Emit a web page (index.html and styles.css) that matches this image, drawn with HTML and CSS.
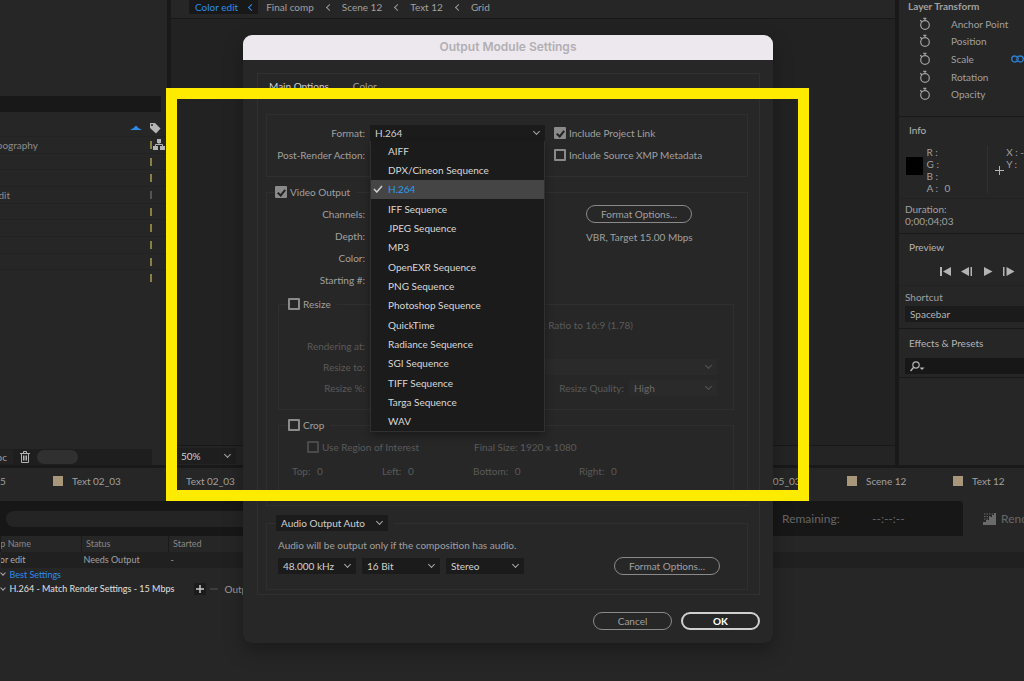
FILE: index.html
```html
<!DOCTYPE html>
<html lang="en">

<head>
  <meta charset="UTF-8">
  <meta name="viewport" content="width=device-width, initial-scale=1.0">
  <title>Output Module Settings</title>
  <link rel="stylesheet" href="styles.css">
</head>

<body>
  <!-- shared icons -->
  <svg class="sprite" aria-hidden="true">
    <symbol id="stopwatch" viewBox="0 0 12 14">
      <circle cx="6" cy="8" r="4.3" fill="none" stroke="currentColor" stroke-width="1.2"/>
      <path d="M4.2 1.3h3.2M6 1v2.5M1.2 3.2l1.8 1.6" fill="none" stroke="currentColor" stroke-width="1.3"/>
    </symbol>
  </svg>

  <div class="app">
    <div class="workspace">
      <section class="project">
        <div class="project-thumb"></div>
        <input class="project-search" type="text" aria-label="Search project">
        <div class="project-head">
          <svg class="sort" width="12" height="6" viewBox="0 0 12 6"><path d="M0 5Q4 3.5 6 .5Q8 3.5 12 5z" fill="#2d8ceb"/></svg>
          <svg width="12" height="12" viewBox="0 0 12 12"><path d="M1 1h5l5.5 5.5-4.5 5L1 6z" fill="#b4b4b4"/><circle cx="3" cy="3" r="1" fill="#262626"/></svg>
        </div>
        <ul class="project-list">
          <li><span>Typography</span><i></i>
            <svg class="flow" width="12" height="11" viewBox="0 0 12 11"><path d="M4 0h4v4H4zM0 7h5v4H0zM7 7h5v4H7z" fill="#b4b4b4"/><path d="M6 4v1.5M2.5 7V5.5h7V7" fill="none" stroke="#b4b4b4"/></svg>
          </li>
          <li><i></i></li>
          <li><i></i></li>
          <li><span class="short">Color edit</span><i class="grey"></i></li>
          <li><i></i></li>
          <li><i></i></li>
          <li><i></i></li>
          <li><i></i></li>
          <li><i></i></li>
        </ul>
        <div class="project-foot">
          <span class="bpc">8 bpc</span>
          <svg width="10" height="12" viewBox="0 0 10 12" fill="none" stroke="#b4b4b4"><path d="M0 2.5h10M3.5 2V.5h3V2M1.5 3v8.500h7V3M3.5 4.5v5M5 4.5v5M6.5 4.5v5"/></svg>
          <div class="scroll-thumb"></div>
        </div>
      </section>

      <section class="viewer">
        <nav class="crumbs">
          <a class="active" href="#">Color edit</a>
          <a href="#">Final comp</a>
          <a href="#">Scene 12</a>
          <a href="#">Text 12</a>
          <a href="#">Grid</a>
        </nav>
        <div class="canvas"></div>
        <div class="viewer-foot">
          <span class="select zoom"><select aria-label="Magnification"><option>50%</option></select></span>
        </div>
      </section>

      <aside class="sidebar">
        <section class="transform">
          <h2>Layer Transform</h2>
          <ul>
            <li><svg width="12" height="14"><use href="#stopwatch"/></svg>Anchor Point</li>
            <li><svg width="12" height="14"><use href="#stopwatch"/></svg>Position</li>
            <li><svg width="12" height="14"><use href="#stopwatch"/></svg>Scale
              <svg class="link" width="13" height="8" viewBox="0 0 13 8" fill="none" stroke="#2d7fd0" stroke-width="1.4"><path d="M7 5.5C6 7 4.8 7 3.7 7a3 3 0 0 1 0-6C6 1 6.5 3 8 4.2"/><path d="M6 2.5C7 1 8.2 1 9.3 1a3 3 0 0 1 0 6C7 7 6.5 5 5 3.8"/></svg>
            </li>
            <li><svg width="12" height="14"><use href="#stopwatch"/></svg>Rotation</li>
            <li><svg width="12" height="14"><use href="#stopwatch"/></svg>Opacity</li>
          </ul>
        </section>
        <section class="info">
          <h3>Info</h3>
          <div class="info-values">
            <div class="swatch"></div>
            <dl>
              <dt>R :</dt><dd></dd>
              <dt>G :</dt><dd></dd>
              <dt>B :</dt><dd></dd>
              <dt>A :</dt><dd>0</dd>
            </dl>
            <svg class="cross" width="9" height="9" viewBox="0 0 9 9" stroke="#b4b4b4"><path d="M4.5 0v9M0 4.5h9"/></svg>
            <div class="pos">X : -<br>Y :</div>
          </div>
          <p class="duration">Duration:<br>0;00;04;03</p>
        </section>
        <section class="preview">
          <h3>Preview</h3>
          <div class="transport">
            <button aria-label="First frame"><svg width="12" height="9" viewBox="0 0 12 9"><path d="M0 0h2v9H0zM11 0v9L3 4.5z"/></svg></button>
            <button aria-label="Previous frame"><svg width="12" height="9" viewBox="0 0 12 9"><path d="M8 0v9L0 4.5zM9.5 0h1.5v9H9.5z"/></svg></button>
            <button aria-label="Play"><svg width="12" height="9" viewBox="0 0 12 9"><path d="M2 0v9l8.5-4.5z"/></svg></button>
            <button aria-label="Next frame"><svg width="12" height="9" viewBox="0 0 12 9"><path d="M0 0h1.5v9H0zM3.5 0v9l8-4.5z"/></svg></button>
          </div>
          <label for="shortcut">Shortcut</label>
          <select id="shortcut"><option>Spacebar</option></select>
        </section>
        <section class="effects">
          <h3>Effects &amp; Presets</h3>
          <div class="effects-search">
            <svg width="15" height="11" viewBox="0 0 15 11"><circle cx="6" cy="4" r="3.2" fill="none" stroke="#b4b4b4" stroke-width="1.2"/><path d="M3.7 6.3L.5 10" stroke="#b4b4b4" stroke-width="1.5"/><path d="M9.5 6.5h5L12 9z" fill="#b4b4b4"/></svg>
            <input type="text" aria-label="Search effects">
          </div>
        </section>
      </aside>
    </div>

    <nav class="timeline-tabs">
      <a class="cut" href="#">5</a>
      <a class="wide" href="#">Text 02_03</a>
      <a class="wide" href="#">Text 02_03</a>
      <span class="spacer"></span>
      <a class="wider" href="#">Scene 05_03</a>
      <a href="#">Scene 12</a>
      <a class="last" href="#">Text 12</a>
    </nav>

    <div class="queue-bar">
      <div class="queue-status">
        <div class="progress"></div>
        <span class="remaining">Remaining:</span>
        <span class="time">--:--:--</span>
      </div>
      <button class="render" disabled>
        <svg width="13" height="12" viewBox="0 0 13 12"><path d="M13 0v12H0V9h3V7h3V4h3V2h2V0z" fill="#6a6a6a"/><path d="M1 1h9M1 3.5h7M1 6h4" stroke="#666" stroke-dasharray="1.5 1"/></svg>
        Render
      </button>
    </div>

    <table class="queue">
      <thead>
        <tr>
          <th class="name"><span class="clip">Comp Name</span></th>
          <th class="status">Status</th>
          <th>Started</th>
        </tr>
      </thead>
      <tbody>
        <tr class="item">
          <td><span class="clip">Color edit</span></td>
          <td>Needs Output</td>
          <td>-</td>
        </tr>
        <tr class="setting">
          <td colspan="3"><span class="arrow"></span><a href="#">Best Settings</a></td>
        </tr>
        <tr class="setting">
          <td colspan="3">
            <div class="module">
              <span class="arrow"></span>
              <a class="module-name" href="#">H.264 - Match Render Settings - 15 Mbps</a>
              <button class="plus" aria-label="Add output module"><svg width="12" height="12" viewBox="0 0 12 12"><path d="M6 2v8M2 6h8" stroke="#ccc" stroke-width="1.5"/></svg></button>
              <button class="minus" aria-label="Remove output module"><svg width="12" height="12" viewBox="0 0 12 12"><path d="M2 6h8" stroke="#444" stroke-width="1.5"/></svg></button>
              <span class="output-to">Output To:</span>
            </div>
          </td>
        </tr>
      </tbody>
    </table>
  </div>

  <form class="dialog" role="dialog" aria-labelledby="dialog-title">
    <h1 id="dialog-title">Output Module Settings</h1>
    <div class="dialog-body">
      <div class="pane">
        <nav class="tabs">
          <a class="active" href="#">Main Options</a>
          <a href="#">Color</a>
        </nav>

        <div class="group">
          <div class="row">
            <label class="name" for="format">Format:</label>
            <div class="format">
              <span class="select"><select id="format"><option>H.264</option></select></span>
              <ul class="menu">
                <li>AIFF</li>
                <li>DPX/Cineon Sequence</li>
                <li class="selected"><svg width="10" height="8" viewBox="0 0 10 8"><path d="M1 4l2.8 3L9 1" fill="none" stroke="#d0d0d0" stroke-width="1.5"/></svg>H.264</li>
                <li>IFF Sequence</li>
                <li>JPEG Sequence</li>
                <li>MP3</li>
                <li>OpenEXR Sequence</li>
                <li>PNG Sequence</li>
                <li>Photoshop Sequence</li>
                <li>QuickTime</li>
                <li>Radiance Sequence</li>
                <li>SGI Sequence</li>
                <li>TIFF Sequence</li>
                <li>Targa Sequence</li>
                <li>WAV</li>
              </ul>
            </div>
            <label class="check"><input type="checkbox" checked>Include Project Link</label>
          </div>
          <div class="row">
            <span class="name">Post-Render Action:</span>
            <div class="format"></div>
            <label class="check"><input type="checkbox">Include Source XMP Metadata</label>
          </div>
        </div>

        <fieldset class="video">
          <legend><label class="check"><input type="checkbox" checked>Video Output</label></legend>
          <div class="video-top">
            <div>
              <div class="row"><span class="name">Channels:</span></div>
              <div class="row"><span class="name">Depth:</span></div>
              <div class="row"><span class="name">Color:</span></div>
              <div class="row"><span class="name">Starting #:</span></div>
            </div>
            <div class="codec">
              <button type="button" class="pill">Format Options...</button>
              <p>VBR, Target 15.00 Mbps</p>
            </div>
          </div>

          <fieldset class="resize">
            <legend><label class="check"><input type="checkbox">Resize</label></legend>
            <div class="row ratio">Lock Aspect Ratio to 16:9 (1.78)</div>
            <div class="row"><span class="name">Rendering at:</span></div>
            <div class="row">
              <label class="name" for="resize-to">Resize to:</label>
              <span class="select preset"><select id="resize-to" disabled><option></option></select></span>
            </div>
            <div class="row">
              <span class="name">Resize %:</span>
              <label class="quality-label" for="quality">Resize Quality:</label>
              <span class="select quality"><select id="quality" disabled><option>High</option></select></span>
            </div>
          </fieldset>

          <fieldset class="crop">
            <legend><label class="check"><input type="checkbox">Crop</label></legend>
            <div class="row roi">
              <label class="check"><input type="checkbox" disabled>Use Region of Interest</label>
              <span>Final Size: 1920 x 1080</span>
            </div>
            <div class="row edges">
              <span>Top: <b>0</b></span>
              <span>Left: <b>0</b></span>
              <span>Bottom: <b>0</b></span>
              <span>Right: <b>0</b></span>
            </div>
          </fieldset>
        </fieldset>

        <fieldset class="audio">
          <legend><span class="select mode"><select aria-label="Audio output"><option>Audio Output Auto</option></select></span></legend>
          <p>Audio will be output only if the composition has audio.</p>
          <div class="row">
            <span class="select"><select aria-label="Sample rate"><option>48.000 kHz</option></select></span>
            <span class="select"><select aria-label="Bit depth"><option>16 Bit</option></select></span>
            <span class="select"><select aria-label="Channels"><option>Stereo</option></select></span>
            <button type="button" class="pill">Format Options...</button>
          </div>
        </fieldset>
      </div>

      <div class="actions">
        <button type="button" class="pill">Cancel</button>
        <button type="button" class="pill primary">OK</button>
      </div>
    </div>
  </form>

  <div class="highlight"></div>
</body>

</html>
```

FILE: styles.css
```css
* {
  box-sizing: border-box;
}

body {
  margin: 0;
  min-height: 100vh;
  background: #262626;
  color: #a0a0a0;
  font: 10px/14px Lato, sans-serif;
  position: relative;
  overflow: hidden;
}

h1, h2, h3, p, ul, dl, dd {
  margin: 0;
  padding: 0;
  font-size: inherit;
  font-weight: normal;
}

ul {
  list-style: none;
}

a {
  color: inherit;
  text-decoration: none;
}

input, select, button {
  font: inherit;
  color: inherit;
  margin: 0;
  padding: 0;
  border: 0;
  background: none;
  appearance: none;
  border-radius: 0;
}

svg {
  display: block;
  flex: none;
}

.sprite {
  position: absolute;
  width: 0;
  height: 0;
}

/* drop-downs and tick boxes */
.select {
  display: flex;
  align-items: center;
  height: 16px;
  background: #1b1b1b;
  position: relative;
  color: #d0d0d0;
}

.select select {
  width: 100%;
  height: 16px;
  padding-left: 5px;
  opacity: 1;
}

.select::after {
  content: "";
  position: absolute;
  right: 6px;
  width: 4px;
  height: 4px;
  margin-bottom: 3px;
  border: solid #a8a8a8;
  border-width: 0 1px 1px 0;
  transform: rotate(45deg);
  pointer-events: none;
}

.check {
  display: flex;
  align-items: center;
  gap: 3px;
}

.check input {
  width: 12px;
  height: 12px;
  border: 2px solid #8a8a8a;
  border-radius: 1px;
  position: relative;
}

.check input:checked {
  background: #8a8a8a;
}

.check input:checked::after {
  content: "";
  position: absolute;
  left: 2px;
  top: 0;
  width: 3px;
  height: 6px;
  border: solid #222;
  border-width: 0 2px 2px 0;
  transform: rotate(40deg);
}

.check input:disabled {
  border-color: #4a4a4a;
}

.pill {
  height: 18px;
  border: 1px solid #8a8a8a;
  border-radius: 9px;
  padding: 0 14px;
  line-height: 14px;
}

/* workspace */
.workspace {
  display: flex;
  height: 468px;
  background: #191919;
  gap: 4px;
  padding-bottom: 3px;
}

.project {
  width: 167px;
  background: #262626;
  display: flex;
  flex-direction: column;
}

.project-thumb {
  height: 96px;
}

.project-search {
  width: 161px;
  height: 16px;
  background: #181818;
}

.project-head {
  height: 24px;
  padding: 7px 6px 0 0;
  display: flex;
  justify-content: flex-end;
  align-items: center;
  gap: 7px;
}

.project-list {
  height: 150px;
  display: flex;
  flex-direction: column;
}

.project-list li {
  flex: 1;
  display: flex;
  align-items: center;
  border-top: 1px solid #222;
}

.project-list span {
  width: 38px;
  display: flex;
  justify-content: flex-end;
  overflow: hidden;
  white-space: nowrap;
  color: #8c8c8c;
}

.project-list .short {
  width: 10px;
}

.project-list i {
  width: 2px;
  height: 8px;
  margin-left: auto;
  margin-right: 15px;
  background: #8a8040;
}

.project-list .grey {
  background: #555;
}

.project-list .flow {
  margin: 0 2px 0 -14px;
}

.project-foot {
  height: 16px;
  margin-top: auto;
  margin-right: 15px;
  display: flex;
  align-items: center;
  gap: 7px;
  background: #1e1e1e;
}

.bpc {
  width: 13px;
  padding-right: 6px;
  display: flex;
  justify-content: flex-end;
  overflow: hidden;
  background: #222;
  white-space: nowrap;
}

.scroll-thumb {
  width: 41px;
  height: 14px;
  border-radius: 7px;
  background: #303030;
}

.viewer {
  flex: 1;
  display: flex;
  flex-direction: column;
  background: #222;
}

.crumbs {
  height: 19px;
  padding-left: 18px;
  display: flex;
  background: #262626;
  border-bottom: 1px solid #181818;
}

.crumbs a {
  height: 14px;
  padding-left: 6px;
  display: flex;
}

.crumbs a:not(:last-child)::after {
  content: "";
  width: 4px;
  height: 4px;
  margin: 5px 4px 0 13px;
  border: solid #999;
  border-width: 0 0 1px 1px;
  transform: rotate(45deg);
}

.crumbs .active {
  margin-right: 2px;
  background: #181818;
  color: #2d8ceb;
}

.crumbs a.active::after {
  margin-left: 11px;
  border-color: #2d8ceb;
}

.canvas {
  flex: 1;
}

.viewer-foot {
  height: 20px;
  padding: 2px 5px;
  background: #242424;
  border-top: 1px solid #181818;
}

.zoom {
  width: 60px;
  background: #1e1e1e;
}

/* right column */
.sidebar {
  width: 125px;
  background: #262626;
  white-space: nowrap;
  overflow: hidden;
}

.sidebar section {
  border-bottom: 1px solid #191919;
}

.sidebar h2 {
  height: 15px;
  padding-left: 9px;
  line-height: 13px;
  font-weight: bold;
}

.sidebar h3 {
  padding-left: 10px;
  color: #b4b4b4;
}

.transform {
  height: 117px;
}

.transform ul {
  height: 88px;
  display: flex;
  flex-direction: column;
}

.transform li {
  flex: 1;
  display: flex;
  align-items: center;
  gap: 20px;
  padding-left: 20px;
}

.transform .link {
  margin-left: auto;
}

.info {
  height: 117px;
  padding-top: 6px;
}

.info-values {
  display: flex;
  padding: 9px 0 0 7px;
  height: 62px;
  border-bottom: 1px solid #222;
  line-height: 12px;
}

.swatch {
  width: 18px;
  height: 18px;
  margin-top: 11px;
  background: #000;
}

.info dl {
  width: 67px;
  height: 47px;
  margin-left: 4px;
  display: grid;
  grid-template-columns: 18px 1fr;
  border-right: 1px solid #303030;
}

.cross {
  margin: 20px 2px 0 7px;
}

.duration {
  padding: 4px 0 0 6px;
  line-height: 12px;
}

.preview {
  height: 95px;
  padding-top: 6px;
}

.transport {
  display: flex;
  gap: 9px;
  height: 32px;
  padding: 4px 0 0 41px;
  align-items: center;
  border-bottom: 1px solid #222;
}

.transport button {
  fill: #b4b4b4;
}

.preview label {
  display: block;
  padding: 4px 0 2px 6px;
}

.preview select {
  display: block;
  width: 100%;
  height: 16px;
  margin-left: 6px;
  padding-left: 5px;
  background: #1b1b1b;
  color: #b4b4b4;
}

.effects {
  height: 49px;
  padding-top: 7px;
}

.effects-search {
  height: 16px;
  margin: 8px 0 0 6px;
  padding-left: 5px;
  display: flex;
  align-items: center;
  gap: 4px;
  background: #171717;
}

.effects-search input {
  width: 80px;
}

/* timeline tabs */
.timeline-tabs {
  height: 33px;
  padding-bottom: 7px;
  display: flex;
  align-items: center;
  white-space: nowrap;
}

.timeline-tabs a {
  width: 106px;
  display: flex;
  align-items: center;
  gap: 9px;
}

.timeline-tabs a::before {
  content: "";
  width: 10px;
  height: 10px;
  background: #a8977a;
}

.timeline-tabs .wide {
  width: 114px;
}

.timeline-tabs .wider {
  width: 122px;
}

.timeline-tabs .last {
  width: 71px;
}

.timeline-tabs .cut {
  width: 6px;
  margin-right: 47px;
}

.timeline-tabs .cut::before {
  display: none;
}

.spacer {
  flex: 1;
}

/* render queue */
.queue-bar {
  display: flex;
  height: 35px;
  justify-content: space-between;
  color: #666;
  font-size: 12px;
}

.queue-status {
  flex: 1;
  display: flex;
  align-items: center;
  padding-left: 6px;
  background: #171717;
  border-radius: 0 4px 0 0;
}

.progress {
  flex: 1;
  height: 16px;
  margin-right: 30px;
  border-radius: 8px;
  background: #242424;
}

.remaining {
  width: 90px;
}

.time {
  width: 91px;
}

.render {
  width: 61px;
  padding-left: 20px;
  display: flex;
  align-items: center;
  gap: 5px;
  overflow: hidden;
}

.queue {
  width: 100%;
  border-collapse: collapse;
  table-layout: fixed;
  font-size: 9px;
}

.queue th,
.queue td {
  height: 16px;
  padding: 0 0 0 2px;
  line-height: 16px;
  text-align: left;
  font-weight: normal;
}

.queue th {
  padding-left: 4px;
  color: #888;
  border-left: 1px solid #1a1a1a;
}

.queue .name {
  width: 81px;
}

.queue .status {
  width: 87px;
}

.queue th:first-child,
.queue td:first-child {
  padding-left: 0;
}

.clip {
  width: 30px;
  display: flex;
  justify-content: flex-end;
  overflow: hidden;
  white-space: nowrap;
}

.item {
  background: #202020;
}

.item .clip {
  width: 25px;
  color: #aaa;
}

.queue .setting td {
  height: 14px;
  line-height: 14px;
  color: #2d8ceb;
  white-space: nowrap;
}

.arrow {
  display: inline-block;
  width: 4px;
  height: 4px;
  margin: 0 5px 3px 0;
  border: solid #a8a8a8;
  border-width: 0 1px 1px 0;
  transform: rotate(45deg);
}

.module {
  display: flex;
  align-items: center;
  color: #9c9c9c;
}

.module-name {
  width: 184px;
  color: #e0e0e0;
}

.module button {
  width: 12px;
  height: 12px;
  margin-right: 2px;
  background: #1b1b1b;
}

.module .minus {
  background: none;
  margin-right: 5px;
}

.output-to {
  font-size: 10px;
}

/* dialog */
.dialog {
  position: absolute;
  left: 243px;
  top: 35px;
  width: 530px;
  background: #272727;
  border-radius: 9px;
  box-shadow: 0 8px 20px rgba(0, 0, 0, 0.3);
}

.dialog h1 {
  height: 25px;
  border-radius: 9px 9px 0 0;
  background: #ede8ed;
  color: #b2afb3;
  font: 600 12px/24px Inter, sans-serif;
  text-align: center;
}

.dialog-body {
  padding: 13px 13px 13px 14px;
}

.pane {
  border: 1px solid #303030;
  padding: 4px 11px 4px 8px;
}

.tabs {
  display: flex;
  gap: 24px;
  padding-left: 3px;
  line-height: 16px;
  margin-bottom: 20px;
}

.tabs .active {
  color: #d0d0d0;
}

.group,
fieldset {
  margin: 0;
  padding: 0;
  min-width: 0;
  border: 1px solid #2f2f2f;
}

.group {
  padding: 7px 0 10px;
}

legend {
  height: 14px;
  margin-left: 9px;
  padding: 0 6px 0 0;
}

.row {
  height: 22px;
  display: flex;
  align-items: center;
}

.row .name {
  width: 98px;
  text-align: right;
  white-space: nowrap;
}

.format {
  width: 175px;
  margin: 0 9px 0 5px;
  position: relative;
}

/* fifteen entries share the height evenly */
.menu {
  position: absolute;
  z-index: 1;
  top: 16px;
  left: 0;
  width: 175px;
  height: 291px;
  display: flex;
  flex-direction: column;
  background: #1b1b1b;
  border: 1px solid #303030;
  border-top: 0;
  box-shadow: 0 4px 8px rgba(0, 0, 0, 0.3);
  color: #d8d8d8;
}

.menu li {
  flex: 1;
  display: flex;
  align-items: center;
  padding-left: 17px;
}

.menu .selected {
  padding-left: 2px;
  gap: 5px;
  background: #454545;
  color: #2d9bf0;
}

.video {
  margin-top: 8px;
  padding: 4px 13px 8px 11px;
}

.video > legend {
  margin-left: -3px;
}

.video-top {
  display: flex;
}

.video-top .name {
  width: 87px;
}

.codec {
  margin-left: 221px;
  padding-top: 2px;
}

.codec p {
  margin-top: 7px;
}

.resize {
  margin-top: 6px;
  padding: 3px 16px 11px 0;
  color: #5a5a5a;
}

.resize .row {
  height: 21px;
}

.resize .name {
  width: 86px;
}

.resize legend,
.crop legend {
  color: #a0a0a0;
}

.resize .ratio {
  justify-content: flex-end;
  padding-right: 84px;
}

.resize .select {
  background: #2a2a2a;
  color: #6a6a6a;
}

.resize .select::after {
  border-color: #555;
}

.preset {
  flex: 1;
  margin-left: 5px;
}

.quality-label {
  margin-left: auto;
}

.quality {
  width: 88px;
  margin-left: 5px;
}

.crop {
  margin-top: 8px;
  padding: 4px 16px 14px 13px;
  color: #5a5a5a;
}

.crop > legend {
  margin-left: -4px;
}

.roi {
  padding-left: 15px;
}

.roi span {
  margin-left: 55px;
}

.edges {
  margin-top: 2px;
  display: grid;
  grid-template-columns: 90px 91px 106px 1fr;
}

.edges b {
  margin-left: 4px;
  font-weight: normal;
}

.audio {
  margin-top: 9px;
  padding: 4px 27px 12px 11px;
}

.audio legend {
  height: 16px;
  margin-left: -2px;
}

.mode {
  width: 112px;
}

.audio p {
  line-height: 20px;
}

.audio .row {
  gap: 6px;
}

.audio .row .select {
  width: 78px;
}

.audio .row .pill {
  margin-left: auto;
}

.actions {
  display: flex;
  justify-content: flex-end;
  gap: 9px;
  padding-top: 17px;
}

.actions .pill {
  width: 79px;
}

.pill.primary {
  border: 2px solid #d0d0d0;
  color: #fff;
  font-weight: bold;
}

/* callout over the dialog */
.highlight {
  position: absolute;
  left: 166px;
  top: 88px;
  width: 643px;
  height: 413px;
  border: 11px solid #ffeb00;
  pointer-events: none;
}
```
